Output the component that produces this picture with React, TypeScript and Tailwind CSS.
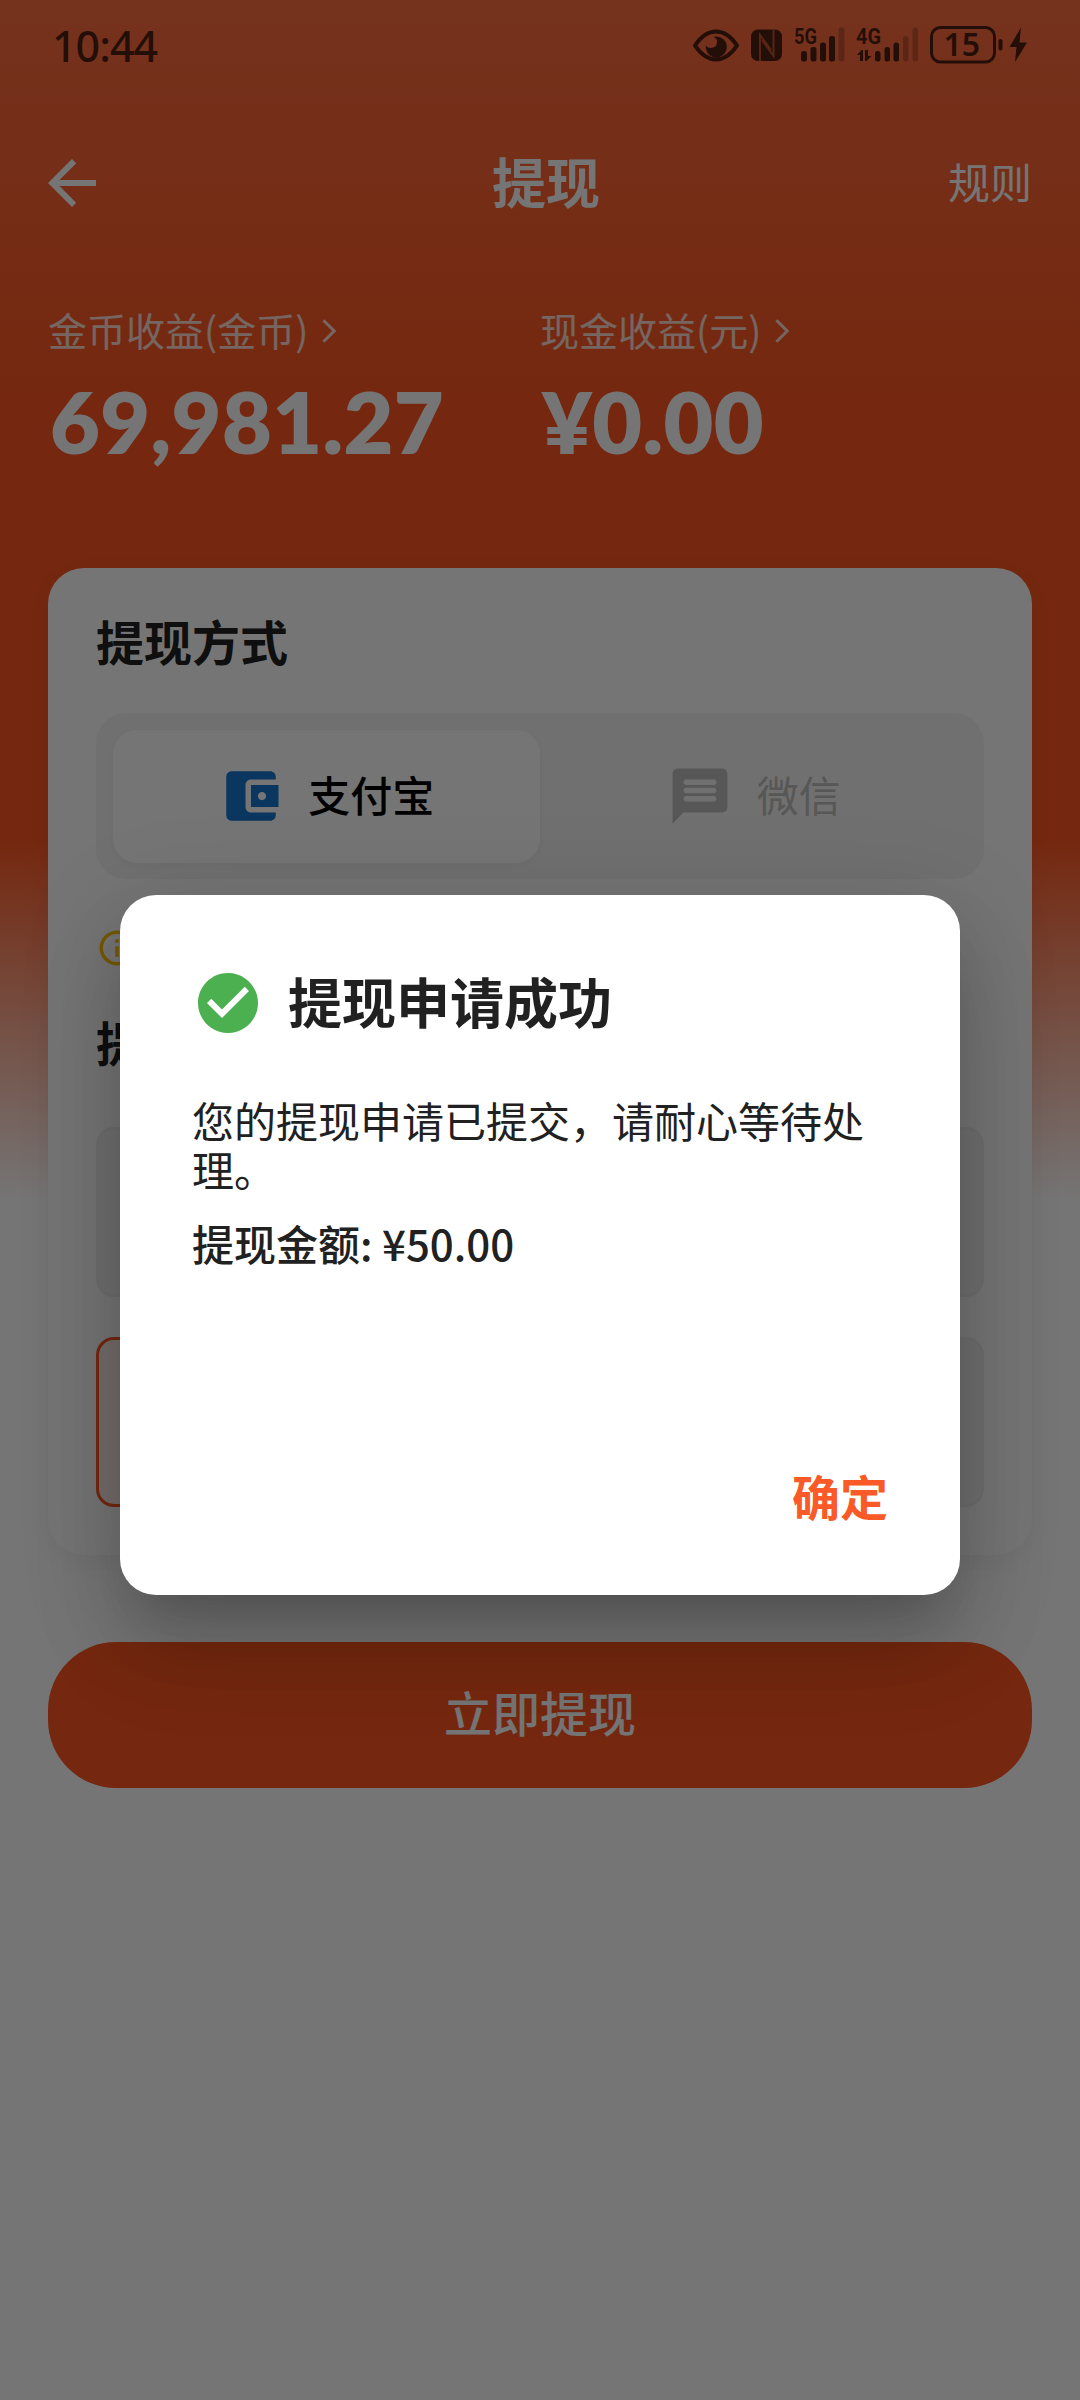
import React from "react";
import clsx from "clsx";

const AMOUNT_ROWS = [
    { id: "row-1", selected: false },
    { id: "row-2", selected: true },
];

const EARNINGS = [
    { label: "金币收益(金币)", value: "69,981.27" },
    { label: "现金收益(元)", value: "¥0.00" },
];

function StatusBar() {
    return (
        <div className="flex h-[90px] items-center justify-between pl-[52px] pr-[53px] text-black/70">
            <span className="font-['Noto_Sans',sans-serif] text-[43px] font-medium leading-none tracking-[-1px]">10:44</span>
            <svg className="overflow-visible" width="335" height="40" viewBox="692 25 335 40" fill="currentColor">
                {/* Eye */}
                <path d="M695 45.500C702 35 709 31.500 716 31.500S730 35 737 45.500C730 56 723 59.500 716 59.500S702 56 695 45.500Z" fill="none" stroke="currentColor" strokeWidth="4" strokeLinejoin="round" />
                <path d="M715.500 36.500A10.500 10.500 0 1 1 706 45Q707 48 711 48Q717.500 47 717 41.500Q717 38 713.500 37Z" />
                {/* NFC */}
                <rect x="751" y="29.500" width="31" height="31.500" rx="7" />
                <path d="M760 61V35L771 50M773.500 29.500V56L762 40" fill="none" stroke="#ff6b3c" strokeWidth="2" opacity="0.65" />
                {/* Signal 5G */}
                <text x="794" y="44" fontSize="22.500" fontWeight="700" fontFamily="Roboto, sans-serif" textLength="23" lengthAdjust="spacingAndGlyphs">5G</text>
                <rect x="801" y="51" width="6" height="10.500" rx="2.500" />
                <rect x="810.500" y="47" width="6" height="14.500" rx="2.500" />
                <rect x="820" y="42.500" width="6" height="19" rx="2.500" />
                <rect x="829" y="36" width="6" height="25.500" rx="2.500" />
                <rect x="838.500" y="27.500" width="6" height="34" rx="2.500" opacity="0.3" />
                {/* Signal 4G */}
                <text x="856" y="44" fontSize="22.500" fontWeight="700" fontFamily="Roboto, sans-serif" textLength="25" lengthAdjust="spacingAndGlyphs">4G</text>
                <path d="M857 55L861.500 50H863V61H860V55ZM865 50H868V56H871.500L866.500 61H865Z" />
                <rect x="875" y="51" width="5.500" height="10.500" rx="2.500" />
                <rect x="884.500" y="47" width="5.500" height="14.500" rx="2.500" />
                <rect x="893.500" y="42.500" width="5.500" height="19" rx="2.500" />
                <rect x="903" y="36" width="5.500" height="25.500" rx="2.500" opacity="0.3" />
                <rect x="912.500" y="27.500" width="5.500" height="34" rx="2.500" opacity="0.3" />
                {/* Battery */}
                <rect x="931.500" y="27.500" width="63" height="34.500" rx="9" fill="none" stroke="currentColor" strokeWidth="3" />
                <text x="943.500" y="56" fontSize="32" fontWeight="600" fontFamily="Noto Sans, sans-serif" textLength="36.500">15</text>
                <rect x="998.500" y="39" width="4" height="11.500" rx="2" />
                <path d="M1021 27.500L1009.500 47H1016.500L1015 62L1027 42.500H1019.500Z" />
            </svg>
        </div>
    );
}

function ChevronIcon() {
    return (
        <svg className="-ml-[3px] size-12" viewBox="0 0 24 24" fill="none" stroke="currentColor" strokeWidth="1.5">
            <path d="M9.200 6.600L14.600 12l-5.400 5.400" />
        </svg>
    );
}

function WalletIcon() {
    return (
        <svg className="size-[66px] text-[#1976d2]" viewBox="0 0 24 24" fill="currentColor">
            <path d="M21 18v1c0 1.100-.9 2-2 2H5c-1.110 0-2-.9-2-2V5c0-1.100.89-2 2-2h14c1.100 0 2 .9 2 2v1h-9c-1.110 0-2 .9-2 2v8c0 1.100.89 2 2 2h9zm-9-2h10V8H12v8zm4-2.500c-.83 0-1.500-.67-1.500-1.500s.67-1.500 1.500-1.500 1.500.67 1.500 1.500-.67 1.500-1.500 1.500z" />
        </svg>
    );
}

function MessageIcon() {
    return (
        <svg className="size-[66px]" viewBox="0 0 24 24" fill="currentColor">
            <path d="M20 2H4c-1.100 0-2 .9-2 2v18l4-4h14c1.100 0 2-.9 2-2V4c0-1.100-.9-2-2-2zm-3 12H7c-.55 0-1-.45-1-1s.45-1 1-1h10c.55 0 1 .45 1 1s-.45 1-1 1zm0-3H7c-.55 0-1-.45-1-1s.45-1 1-1h10c.55 0 1 .45 1 1s-.45 1-1 1zm0-3H7c-.55 0-1-.45-1-1s.45-1 1-1h10c.55 0 1 .45 1 1s-.45 1-1 1z" />
        </svg>
    );
}

function SuccessDialog() {
    return (
        <div className="absolute inset-0 flex justify-center bg-black/54 pt-[895px]">
            <div
                role="dialog"
                className="flex h-[700px] w-[840px] flex-col rounded-[36px] bg-white px-[72px] text-[#212121] shadow-[0_33px_45px_-21px_rgba(0,0,0,0.14),0_60px_90px_0px_rgba(0,0,0,0.13),0_20px_100px_10px_rgba(0,0,0,0.12)]"
            >
                <div className="mt-[72px] flex items-center gap-6">
                    <svg className="size-[72px] text-[#4caf50]" viewBox="0 0 24 24" fill="currentColor">
                        <path d="M12 2C6.480 2 2 6.480 2 12s4.480 10 10 10 10-4.480 10-10S17.520 2 12 2zm-2 15l-5-5 1.410-1.410L10 14.170l7.590-7.590L19 8l-9 9z" />
                    </svg>
                    <h2 className="pb-1 text-[54px] font-bold leading-[68px]">提现申请成功</h2>
                </div>
                <p className="mt-[56px] text-[42px] leading-[49px]">您的提现申请已提交，请耐心等待处理。</p>
                <p className="mt-6 text-[42px] font-medium leading-[51px]">提现金额: ¥50.00</p>
                <button type="button" className="mt-auto mb-[64px] self-end text-[48px] font-bold leading-[72px] text-[#f95a27]">
                    确定
                </button>
            </div>
        </div>
    );
}

export default function App() {
    return (
        <div className="relative h-[2400px] w-[1080px] overflow-hidden bg-white font-['Noto_Sans_CJK_SC',sans-serif]">
            <div className="flex h-full flex-col bg-[linear-gradient(to_bottom,#ff6e40_0px,#ff5722_400px,#ff5722_840px,#ffffff_1200px)]">
                <StatusBar />

                {/* App bar */}
                <header className="flex h-[186px] items-center justify-between pl-9 pr-12 text-white">
                    <svg className="size-[72px]" viewBox="0 0 24 24" fill="currentColor">
                        <path d="M20 11H7.830l5.590-5.590L12 4l-8 8 8 8 1.410-1.410L7.830 13H20v-2z" />
                    </svg>
                    <h1 className="pb-1 pl-9 text-[54px] font-bold leading-none">提现</h1>
                    <button type="button" className="pb-1 text-[42px] leading-none">规则</button>
                </header>

                {/* Earnings */}
                <section className="grid h-[292px] grid-cols-2 content-start px-12 pt-[31px] text-white">
                    {EARNINGS.map((item) => (
                        <div key={item.label}>
                            <div className="flex h-12 items-center text-[39px] text-white/80">
                                <span className="pb-1">{item.label}</span>
                                <ChevronIcon />
                            </div>
                            <div className="mt-[24px] pl-[2px] font-['Lato',sans-serif] text-[86px] font-extrabold leading-[84px] tracking-[0.4px]">{item.value}</div>
                        </div>
                    ))}
                </section>

                {/* Withdraw card */}
                <section className="mx-12 h-[987px] rounded-[36px] bg-white px-12 pt-[37px] shadow-[0_6px_30px_rgba(0,0,0,0.06)]">
                    <h3 className="text-[48px] font-bold leading-[70px] text-[#212121]">提现方式</h3>
                    <div className="mt-[38px] grid h-[166px] grid-cols-2 rounded-[30px] bg-[#f5f5f5] p-[16.500px] text-[42px] font-medium">
                        <button type="button" className="flex items-center justify-center gap-6 rounded-[24px] bg-white text-black shadow-[0_3px_12px_rgba(0,0,0,0.05)]">
                            <WalletIcon />
                            <span className="pb-1.5">支付宝</span>
                        </button>
                        <button type="button" className="flex items-center justify-center gap-6 text-[#bdbdbd]">
                            <MessageIcon />
                            <span className="pb-1.5 font-normal">微信</span>
                        </button>
                    </div>
                    <svg className="mt-12 size-[42px] text-[#ffc107]" viewBox="0 0 24 24" fill="currentColor">
                        <path d="M11 7h2v2h-2zm0 4h2v6h-2zm1-9C6.480 2 2 6.480 2 12s4.480 10 10 10 10-4.480 10-10S17.520 2 12 2zm0 18c-4.410 0-8-3.590-8-8s3.590-8 8-8 8 3.590 8 8-3.590 8-8 8z" />
                    </svg>
                    <h3 className="mt-[37px] text-[48px] font-bold leading-[70px] text-[#212121]">提现金额</h3>
                    <div className="mt-[51px] flex flex-col gap-10">
                        {AMOUNT_ROWS.map((row) => (
                            <div key={row.id} className="grid grid-cols-2 gap-9">
                                <div
                                    className={clsx(
                                        "h-[170px] rounded-[18px] border-[3px]",
                                        row.selected ? "border-[#ff5722] bg-[#ffeee9]" : "border-[#f0f0f0] bg-[#f5f5f5]"
                                    )}
                                />
                                <div className="h-[170px] rounded-[18px] border-[3px] border-[#f0f0f0] bg-[#f5f5f5]" />
                            </div>
                        ))}
                    </div>
                </section>

                <button type="button" className="mx-12 mt-[87px] h-[146px] rounded-[68px] bg-[#ff5722] pb-2 text-[48px] font-medium text-white">
                    立即提现
                </button>
            </div>

            <SuccessDialog />
        </div>
    );
}
